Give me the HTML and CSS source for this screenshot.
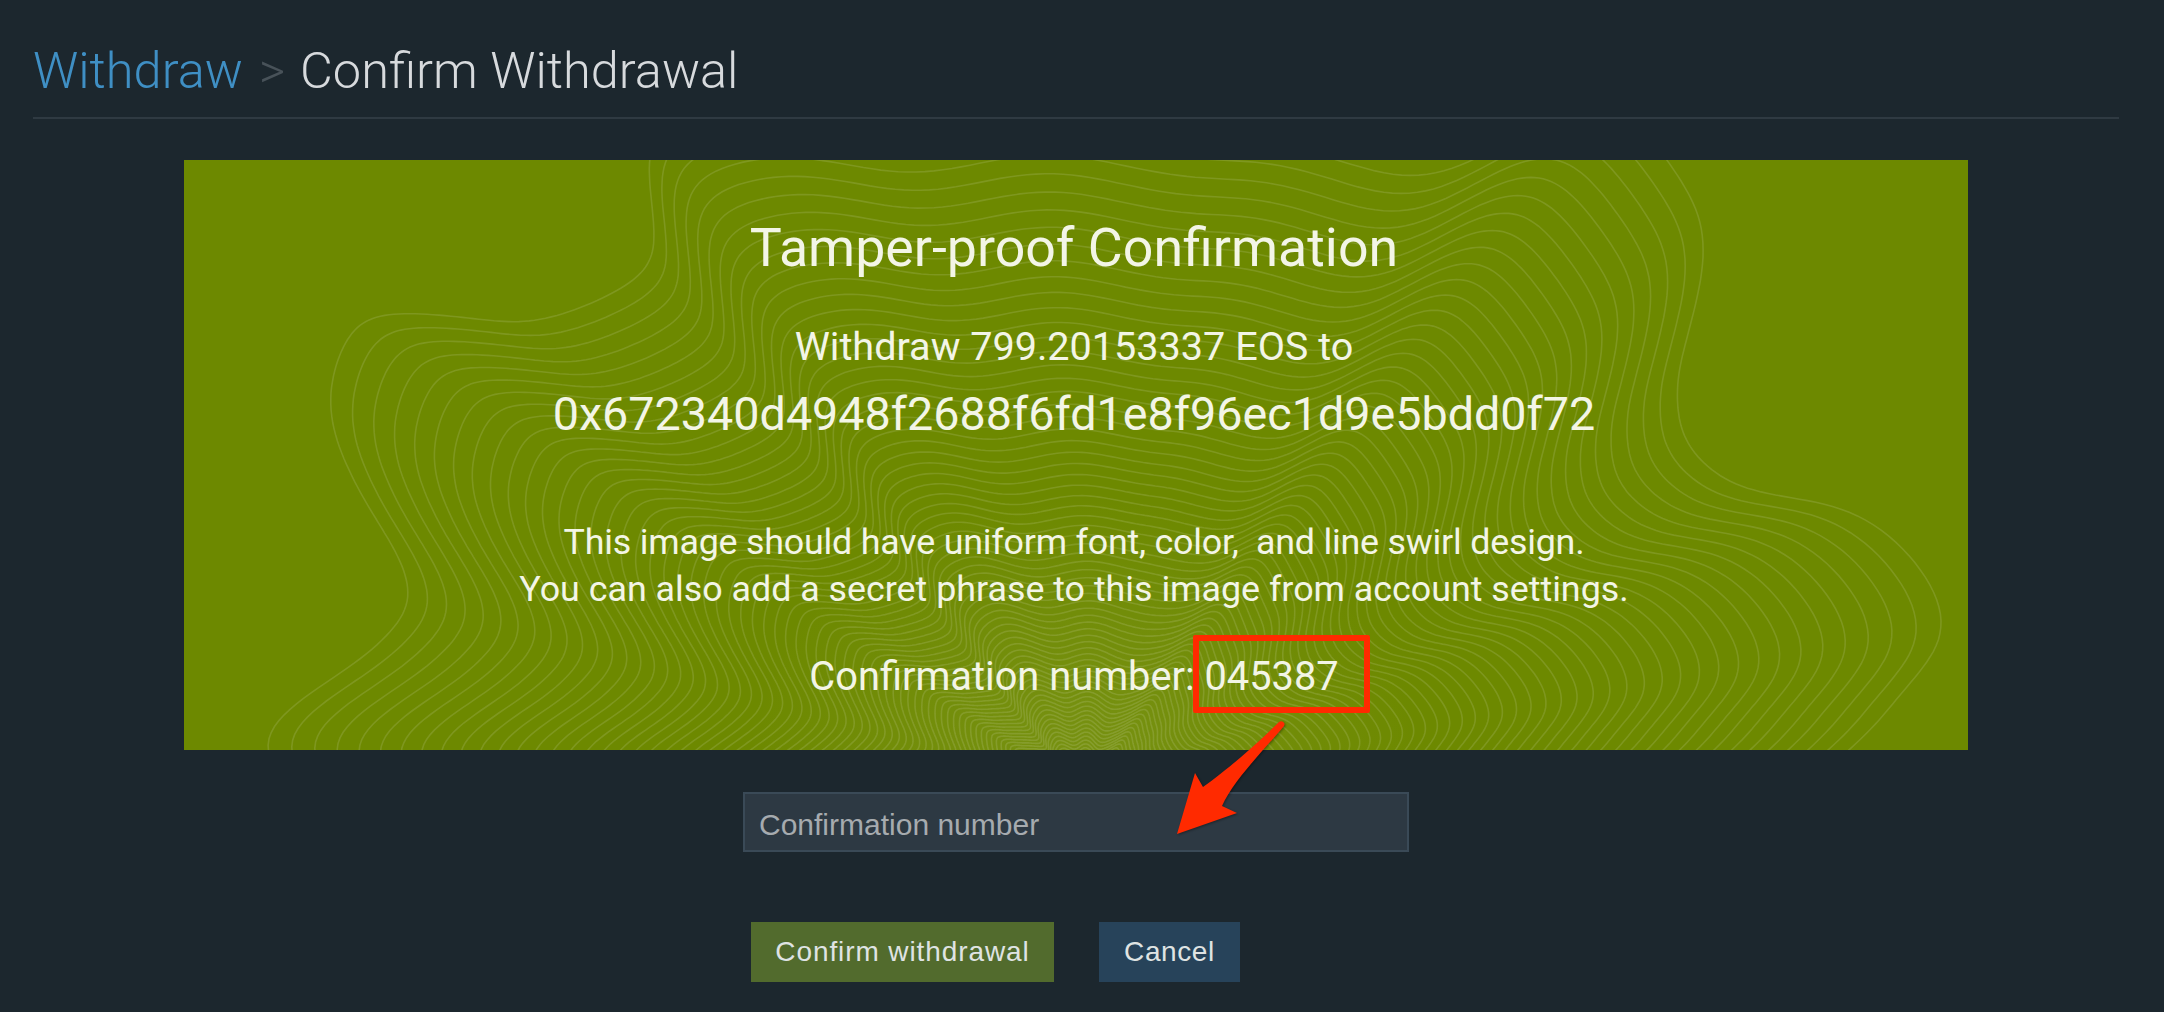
FILE: index.html
```html
<!DOCTYPE html>
<html lang="en">
<head>
<meta charset="utf-8">
<title>Confirm Withdrawal</title>
<link rel="stylesheet" href="styles.css">
</head>
<body>
<main class="page">
  <h1 class="crumbs"><a class="crumb-link" href="#">Withdraw</a><span class="crumb-sep">&gt;</span><span class="crumb-current">Confirm Withdrawal</span></h1>
  <section class="panel">
    <div class="glow"></div>
    <svg class="swirl" id="swirl" viewBox="0 0 1784 590" aria-hidden="true"></svg>
    <h2 class="panel-title">Tamper-proof Confirmation</h2>
    <p class="panel-amount">Withdraw 799.20153337 EOS to</p>
    <p class="panel-address">0x672340d4948f2688f6fd1e8f96ec1d9e5bdd0f72</p>
    <p class="panel-note"><span class="note-first">This image should have uniform font, color,&nbsp; and line swirl design.</span><br>You can also add a secret phrase to this image from account settings.</p>
    <p class="panel-code">Confirmation number: 045387</p>
  </section>
  <form class="confirm-form">
    <input class="code-input" type="text" placeholder="Confirmation number">
    <div class="actions">
      <button class="btn btn-confirm" type="button">Confirm withdrawal</button>
      <button class="btn btn-cancel" type="button">Cancel</button>
    </div>
  </form>
  <div class="mark-box"></div>
  <svg class="mark-arrow" viewBox="0 0 130 130" aria-hidden="true">
    <path d="M107 3 C110 1 114 4 112 7 C95 28 62 60 50 87 L65 94 L5 115 L23 54 L31 68 C50 55 85 25 107 3 Z"/>
  </svg>
</main>
<script src="swirl.js"></script>
</body>
</html>
```

FILE: styles.css
```css
* { box-sizing: border-box; }
html, body { margin: 0; height: 100%; }
body {
  background: #1c272e;
  font-family: "Liberation Sans", Arial, sans-serif;
  overflow: hidden;
}
.page {
  position: relative;
  height: 1012px;
  padding: 0 45px 0 33px;
}
.crumbs {
  margin: 0;
  height: 119px;
  padding-top: 42px;
  border-bottom: 2px solid #2f3a42;
  font-family: Roboto, "Liberation Sans", sans-serif;
  font-size: 50.5px;
  line-height: 58px;
  font-weight: 300;
  display: flex;
}
.crumb-link { color: #3f8fc4; text-decoration: none; }
.crumb-sep { color: #485259; margin: 0 15px 0 16px; }
.crumb-current { color: #d7dadd; }
.panel {
  position: relative;
  width: 1784px;
  height: 590px;
  margin: 41px auto 0;
  background: #6d8900;
  overflow: hidden;
  text-align: center;
  color: #f3f5e6;
  font-family: Roboto, sans-serif;
  padding: 58px 4px 0 0;
}
.glow {
  position: absolute;
  left: 560px;
  top: 330px;
  width: 680px;
  height: 520px;
  background: radial-gradient(closest-side, rgba(255,255,255,.07), rgba(255,255,255,.035) 55%, rgba(255,255,255,0));
}
.swirl { position: absolute; left: 0; top: 0; width: 100%; height: 100%; }
.panel > h2, .panel > p { position: relative; margin: 0; font-weight: 400; }
.panel-title { font-size: 53.7px; line-height: 60px; }
.panel-amount { font-size: 39.6px; line-height: 44px; margin-top: 47px !important; }
.panel-address { font-size: 46.7px; line-height: 50px; margin-top: 20px !important; }
.panel-note { font-size: 35.8px; line-height: 47px; margin-top: 80px !important; }
.note-first { letter-spacing: -.2px; }
.panel-code { font-size: 39.8px; line-height: 46px; margin-top: 41px !important; }
.confirm-form { width: 666px; margin: 42px auto 0; }
.code-input {
  display: block;
  width: 100%;
  height: 60px;
  background: #2d3943;
  border: 2px solid #3a4a57;
  padding: 6px 14px 0;
  font: 30px "Liberation Sans", Arial, sans-serif;
  color: #d7dadd;
}
.code-input::placeholder { color: #a6abaf; opacity: 1; }
.actions { display: flex; gap: 45px; padding: 70px 0 0 8px; }
.btn {
  height: 60px;
  border: 0;
  padding: 0;
  font: 28px "Liberation Sans", Arial, sans-serif;
  letter-spacing: .9px;
  color: #dfe3e3;
}
.btn-confirm { width: 303px; background: #526b2d; }
.btn-cancel { width: 141px; background: #27435a; letter-spacing: .6px; }
.mark-box {
  position: absolute;
  left: 1193px;
  top: 635px;
  width: 177px;
  height: 78px;
  border: 6px solid #ff2a00;
  border-radius: 2px;
}
.mark-arrow {
  position: absolute;
  left: 1172px;
  top: 719px;
  width: 130px;
  height: 130px;
  filter: drop-shadow(1px 1px 1px rgba(0,0,0,.35));
}
.mark-arrow path { fill: #ff2a00; }
```

FILE: swirl.js
```js
(function () {
  var svg = document.getElementById('swirl');
  var ox = 184, oy = 160;
  var cx = 1083 - ox, cy = 795 - oy;
  // outer contour in page coordinates, clockwise from the bottom left
  var pts = [[252,750],[345,672],[410,610],[395,550],[364,500],[328,416],[345,340],[386,313],[470,318],[538,322],[620,290],[655,253],[650,190],[660,120],[770,95],[900,120],[1040,90],[1180,120],[1300,125],[1430,165],[1540,110],[1610,100],[1667,160],[1708,240],[1683,350],[1677,400],[1690,450],[1750,493],[1867,513],[1950,617],[1900,693],[1850,750],[1700,860],[1400,1000],[1083,1050],[700,1000],[400,860]];
  var n = pts.length;
  function cr(a, b, c, d, t) {
    return 0.5 * (2 * b + (c - a) * t + (2 * a - 5 * b + 4 * c - d) * t * t + (3 * b - a - 3 * c + d) * t * t * t);
  }
  var raw = [];
  var per = 14;
  for (var i = 0; i < n; i++) {
    for (var s = 0; s < per; s++) {
      var t = s / per, p0 = pts[(i + n - 1) % n], p1 = pts[i], p2 = pts[(i + 1) % n], p3 = pts[(i + 2) % n];
      raw.push([cr(p0[0], p1[0], p2[0], p3[0], t) - ox - cx, cr(p0[1], p1[1], p2[1], p3[1], t) - oy - cy]);
    }
  }
  // circular moving average keeps the contours free of kinks
  var outer = [], win = 7;
  for (var a = 0; a < raw.length; a++) {
    var sx = 0, sy = 0;
    for (var b = -win; b <= win; b++) {
      var q = raw[(a + b + raw.length) % raw.length];
      sx += q[0]; sy += q[1];
    }
    outer.push([sx / (2 * win + 1), sy / (2 * win + 1)]);
  }
  var out = '';
  var k = 1;
  while (k > 0.04) {
    var d = '';
    for (var j = 0; j < outer.length; j++) {
      var dx = outer[j][0], dy = outer[j][1];
      var th = Math.atan2(dy, dx);
      var fade = Math.pow(1 - k, 4);
      var w = 1 + fade * 0.08 * Math.sin(13 * th + 2) + fade * 0.03 * Math.sin(7 * th + 10 * k);
      d += (j ? 'L' : 'M') + (cx + dx * k * w).toFixed(1) + ' ' + (cy + dy * k * w).toFixed(1);
    }
    out += '<path d="' + d + 'Z"/>';
    k -= 0.0035 + 0.0255 * k;
  }
  svg.innerHTML = '<g fill="none" stroke="#ffffff" stroke-opacity=".12" stroke-width="1.6">' + out + '</g>';
})();
```
